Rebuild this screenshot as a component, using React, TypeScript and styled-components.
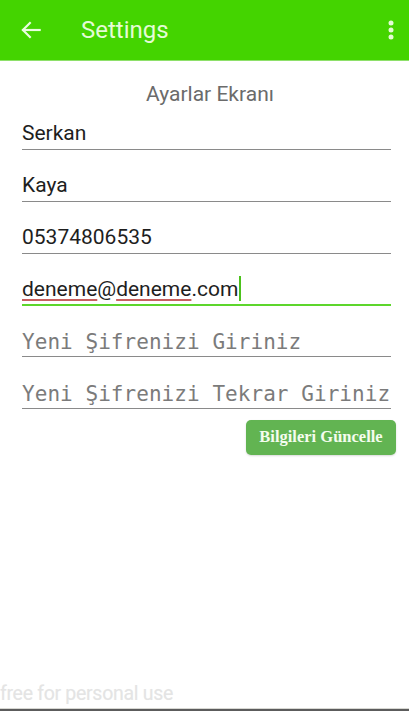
import React from "react";
import styled, { createGlobalStyle } from "styled-components";

const Global = createGlobalStyle`
  html, body { margin: 0; padding: 0; background: #fff; }
  body { font-family: Roboto, "Noto Sans", sans-serif; }
  * { box-sizing: border-box; }
`;

const Page = styled.div`
  width: 409px;
  height: 711px;
  display: flex;
  flex-direction: column;
  background: #fff;
  overflow: hidden;
`;

const AppBar = styled.header`
  height: 61px;
  flex: none;
  background: #44d400;
  border-bottom: 1px solid #8ee06a;
  display: flex;
  align-items: center;
  padding: 0 14px 0 18px;
  color: #eafde0;
`;

const IconButton = styled.div`
  display: flex;
  align-items: center;
  justify-content: center;
`;

const BarTitle = styled.h1`
  margin: 0 0 0 37px;
  font-family: Roboto, sans-serif;
  font-weight: 400;
  font-size: 24px;
  line-height: 28px;
  color: #e4fbd6;
  flex: 1;
`;

const Content = styled.main`
  display: flex;
  flex-direction: column;
  padding: 0 13px 0 22px;
`;

const ScreenTitle = styled.div`
  padding-top: 22px;
  text-align: center;
  font-family: Roboto, sans-serif;
  font-size: 21px;
  line-height: 22px;
  color: #6b6b6b;
  padding-left: 2px;
`;

const Fields = styled.div`
  display: flex;
  flex-direction: column;
  gap: 13px;
  padding-top: 6px;
  margin-right: 5px;
`;

const Field = styled.div<{ $focused?: boolean; $hint?: boolean }>`
  height: 39px;
  display: flex;
  align-items: flex-end;
  padding-bottom: ${(p) => (p.$hint ? "2px" : p.$focused ? "3px" : "4px")};
  border-bottom: ${(p) => (p.$focused ? "2px solid #5dd62c" : "1px solid #8a8a8a")};
  margin-bottom: ${(p) => (p.$focused ? "-1px" : "0")};
`;

const Value = styled.span`
  font-family: Roboto, sans-serif;
  font-size: 21px;
  line-height: 24px;
  color: #1e1e1e;
  white-space: nowrap;
  display: flex;
  align-items: center;
`;

const Misspelled = styled.span`
  text-decoration: underline;
  text-decoration-color: #c86060;
  text-decoration-thickness: 2px;
  text-underline-offset: 3px;
`;

const Caret = styled.span`
  display: inline-block;
  width: 2px;
  height: 25px;
  background: #4cc21c;
  margin-left: 1px;
`;

const Placeholder = styled.span`
  font-family: "DejaVu Sans Mono", "Liberation Mono", monospace;
  font-size: 21px;
  line-height: 24px;
  color: #7b7b7b;
  white-space: nowrap;
  letter-spacing: 0.05px;
`;

const ButtonRow = styled.div`
  display: flex;
  justify-content: flex-end;
  margin-top: 11px;
`;

const UpdateButton = styled.button`
  width: 150px;
  height: 35px;
  border: none;
  border-radius: 5px;
  background: #62b452;
  color: #f4fcee;
  font-family: "Liberation Serif", "Times New Roman", serif;
  font-weight: 700;
  font-size: 16.5px;
  padding: 0 0 1px 0;
  box-shadow: 0 1px 2px rgba(0, 0, 0, 0.15);
`;

const Footer = styled.footer`
  margin-top: auto;
  display: flex;
  flex-direction: column;
`;

const Watermark = styled.div`
  font-family: Roboto, sans-serif;
  font-size: 19.5px;
  line-height: 22px;
  color: #e4e4e4;
  padding: 0 0 3px 0;
  letter-spacing: -0.3px;
  text-shadow: 0 0 1px #f4f4f4;
`;

const BottomEdge = styled.div`
  height: 3px;
  border-top: 1px solid #d7d7d2;
  background: #5c5c5c;
`;

export default function App() {
  return (
    <Page>
      <Global />
      <AppBar>
        <IconButton>
          <svg width="26" height="26" viewBox="0 0 24 24" fill="none" stroke="#eafde0" strokeWidth="2" strokeLinecap="square">
            <path d="M20 12H5" />
            <path d="M11 5.5L4.5 12L11 18.5" />
          </svg>
        </IconButton>
        <BarTitle>Settings</BarTitle>
        <IconButton>
          <svg width="8" height="24" viewBox="0 0 8 24" fill="#e4fbd6">
            <circle cx="4" cy="5" r="2.5" />
            <circle cx="4" cy="12" r="2.5" />
            <circle cx="4" cy="19" r="2.5" />
          </svg>
        </IconButton>
      </AppBar>
      <Content>
        <ScreenTitle>Ayarlar Ekranı</ScreenTitle>
        <Fields>
          <Field>
            <Value>Serkan</Value>
          </Field>
          <Field>
            <Value>Kaya</Value>
          </Field>
          <Field>
            <Value>05374806535</Value>
          </Field>
          <Field $focused>
            <Value>
              <Misspelled>deneme</Misspelled>@<Misspelled>deneme</Misspelled>.com
              <Caret />
            </Value>
          </Field>
          <Field $hint>
            <Placeholder>Yeni Şifrenizi Giriniz</Placeholder>
          </Field>
          <Field $hint>
            <Placeholder>Yeni Şifrenizi Tekrar Giriniz</Placeholder>
          </Field>
        </Fields>
        <ButtonRow>
          <UpdateButton>Bilgileri Güncelle</UpdateButton>
        </ButtonRow>
      </Content>
      <Footer>
        <Watermark>free for personal use</Watermark>
        <BottomEdge />
      </Footer>
    </Page>
  );
}
